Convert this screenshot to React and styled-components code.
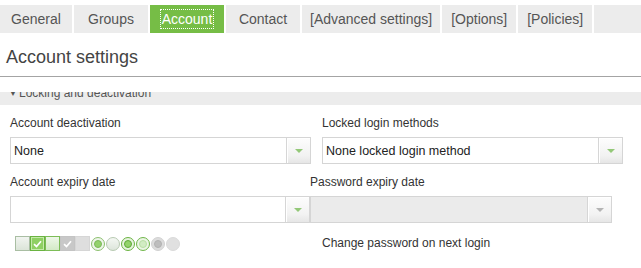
import React from "react";
import styled, { createGlobalStyle, css } from "styled-components";

const GlobalStyle = createGlobalStyle`
  html, body {
    margin: 0;
    padding: 0;
    background: #fff;
  }
  body {
    font-family: "Liberation Sans", Arial, sans-serif;
    overflow: hidden;
  }
`;

const Page = styled.div`
  width: 641px;
  height: 268px;
  padding-top: 5px;
  box-sizing: border-box;
  display: flex;
  flex-direction: column;
  overflow: hidden;
`;

const TabBar = styled.div`
  display: flex;
  height: 28px;
  background: #ececec;
  flex-shrink: 0;
`;

const Tab = styled.div`
  min-width: 58px;
  padding: 0 8px;
  display: flex;
  align-items: center;
  justify-content: center;
  border-right: 2px solid #fff;
  font-size: 14px;
  color: ${(props) => (props.active ? "#fff" : "#555")};
  background: ${(props) => (props.active ? "#76bd46" : "transparent")};
  &:first-child {
    min-width: 56px;
  }
`;

const FocusRing = styled.span`
  line-height: 18px;
  padding: 0 1px;
  border: 1px dotted #fff;
`;

const Heading = styled.h1`
  margin: 0 0 15px;
  height: 44px;
  box-sizing: border-box;
  padding: 14px 0 0 6px;
  font-size: 18px;
  line-height: 20px;
  font-weight: normal;
  color: #444;
  border-bottom: 1px solid #a4a4a4;
  flex-shrink: 0;
`;

const ScrollArea = styled.div`
  flex: 1;
  overflow: hidden;
`;

/* content is scrolled a few pixels down, like in the original */
const ScrollContent = styled.div`
  margin-top: -8px;
`;

const SectionHeader = styled.div`
  height: 21px;
  box-sizing: border-box;
  background: #ececec;
  display: flex;
  align-items: flex-start;
  padding-left: 9px;
  font-size: 12px;
  line-height: 19px;
  color: #555;
`;

const Toggle = styled.span`
  font-size: 8px;
  width: 10px;
  color: #555;
`;

const Form = styled.div`
  padding: 10px 0 0 10px;
`;

const Row = styled.div`
  display: flex;
  gap: ${(props) => props.gap || 0}px;
  margin-top: ${(props) => props.top || 0}px;
  align-items: ${(props) => props.align || "stretch"};
`;

const Field = styled.div`
  width: ${(props) => props.width}px;
  display: flex;
  flex-direction: column;
`;

const Label = styled.div`
  font-size: 12px;
  line-height: 16px;
  color: #333;
  margin-bottom: 6px;
`;

const SelectBox = styled.div`
  height: 27px;
  box-sizing: border-box;
  border: 1px solid #d5d5d5;
  display: flex;
  background: ${(props) => (props.disabled ? "#ebebeb" : "#fff")};
`;

const SelectValue = styled.div`
  flex: 1;
  display: flex;
  align-items: center;
  padding-left: 3px;
  font-size: 12.5px;
  color: #222;
`;

const ArrowButton = styled.div`
  width: 23px;
  border-left: 1px solid #d6d6d6;
  background: linear-gradient(#fdfdfd, #f2f2f2 70%, #e6e6e6);
  box-shadow: inset 1px 1px 0 #fff;
  display: flex;
  align-items: center;
  justify-content: center;
`;

const Triangle = styled.span`
  width: 0;
  height: 0;
  border-left: 4px solid transparent;
  border-right: 4px solid transparent;
  border-top: 4px solid ${(props) => (props.disabled ? "#b4b4b4" : "#93c878")};
  margin-top: 1px;
`;

const WidgetStrip = styled.div`
  display: flex;
  align-items: center;
  padding-left: 5px;
`;

const checkVariants = {
  normal: css`
    border-color: #a9bea3;
    background: linear-gradient(#f1f4f0, #dbe4d8);
  `,
  checked: css`
    border-color: #6ab341;
    background: #8fd063;
    box-shadow: inset 0 0 0 1px #c4eaa9;
  `,
  hover: css`
    border-color: #7dbd58;
    background: linear-gradient(#eef7e9, #d3eac6);
  `,
  disabledChecked: css`
    border-color: #c4c4c4;
    background: #c8c8c8;
  `,
  disabled: css`
    border-color: #d6d6d6;
    background: #dedede;
  `,
};

const CheckBox = styled.span`
  width: 15px;
  height: 15px;
  box-sizing: border-box;
  border: 1px solid;
  display: flex;
  align-items: center;
  justify-content: center;
  ${(props) => checkVariants[props.variant]}
`;

const radioVariants = {
  checked: css`
    border-color: #8cc06f;
    background: #eef5ea;
    &::after {
      background: #93d26c;
      border: 1px solid #7bb85a;
    }
  `,
  normal: css`
    border-color: #b7c9b1;
    background: linear-gradient(#f4f7f3, #dde5db);
  `,
  checkedHover: css`
    border-color: #6ab341;
    background: #e6f3de;
    &::after {
      background: #92d36a;
      border: 1px solid #5ea838;
    }
  `,
  hover: css`
    border-color: #70b64a;
    background: #eaf5e3;
    &::after {
      background: #d2ecc3;
      border: 1px solid #b9dea4;
    }
  `,
  disabledChecked: css`
    border-color: #d2d2d2;
    background: #dcdcdc;
    &::after {
      background: #bdbdbd;
      border: 1px solid #b2b2b2;
    }
  `,
  disabled: css`
    border-color: #dadada;
    background: #e0e0e0;
  `,
};

const Radio = styled.span`
  width: 14px;
  height: 14px;
  box-sizing: border-box;
  border-radius: 50%;
  border: 1px solid;
  margin-left: 1px;
  display: flex;
  align-items: center;
  justify-content: center;
  &::after {
    content: "";
    width: 8px;
    height: 8px;
    box-sizing: border-box;
    border-radius: 50%;
  }
  ${(props) => radioVariants[props.variant]}
  &:first-of-type {
    margin-left: 1px;
  }
`;

const CheckText = styled.div`
  font-size: 12px;
  line-height: 15px;
  color: #333;
`;

const CheckMark = () => (
  <svg width="9" height="8" viewBox="0 0 9 8">
    <polyline
      points="1,4.2 3.5,6.5 8,1.2"
      fill="none"
      stroke="#fff"
      strokeWidth="1.7"
    />
  </svg>
);

const tabs = [
  "General",
  "Groups",
  "Account",
  "Contact",
  "[Advanced settings]",
  "[Options]",
  "[Policies]",
];

const Select = ({ value, disabled }) => (
  <SelectBox disabled={disabled}>
    <SelectValue>{value}</SelectValue>
    <ArrowButton>
      <Triangle disabled={disabled} />
    </ArrowButton>
  </SelectBox>
);

const App = () => (
  <>
    <GlobalStyle />
    <Page>
      <TabBar>
        {tabs.map((tab) => (
          <Tab key={tab} active={tab === "Account"}>
            {tab === "Account" ? <FocusRing>{tab}</FocusRing> : tab}
          </Tab>
        ))}
      </TabBar>
      <Heading>Account settings</Heading>
      <ScrollArea>
        <ScrollContent>
          <SectionHeader>
            <Toggle>▼</Toggle>
            Locking and deactivation
          </SectionHeader>
          <Form>
            <Row gap={11}>
              <Field width={301}>
                <Label>Account deactivation</Label>
                <Select value="None" />
              </Field>
              <Field width={301}>
                <Label>Locked login methods</Label>
                <Select value="None locked login method" />
              </Field>
            </Row>
            <Row top={10}>
              <Field width={300}>
                <Label>Account expiry date</Label>
                <Select value="" />
              </Field>
              <Field width={302}>
                <Label>Password expiry date</Label>
                <Select value="" disabled />
              </Field>
            </Row>
            <Row top={13} align="center">
              <Field width={312}>
                <WidgetStrip>
                  <CheckBox variant="normal" />
                  <CheckBox variant="checked">
                    <CheckMark />
                  </CheckBox>
                  <CheckBox variant="hover" />
                  <CheckBox variant="disabledChecked">
                    <CheckMark />
                  </CheckBox>
                  <CheckBox variant="disabled" />
                  <Radio variant="checked" />
                  <Radio variant="normal" />
                  <Radio variant="checkedHover" />
                  <Radio variant="hover" />
                  <Radio variant="disabledChecked" />
                  <Radio variant="disabled" />
                </WidgetStrip>
              </Field>
              <CheckText>Change password on next login</CheckText>
            </Row>
          </Form>
        </ScrollContent>
      </ScrollArea>
    </Page>
  </>
);

export default App;
